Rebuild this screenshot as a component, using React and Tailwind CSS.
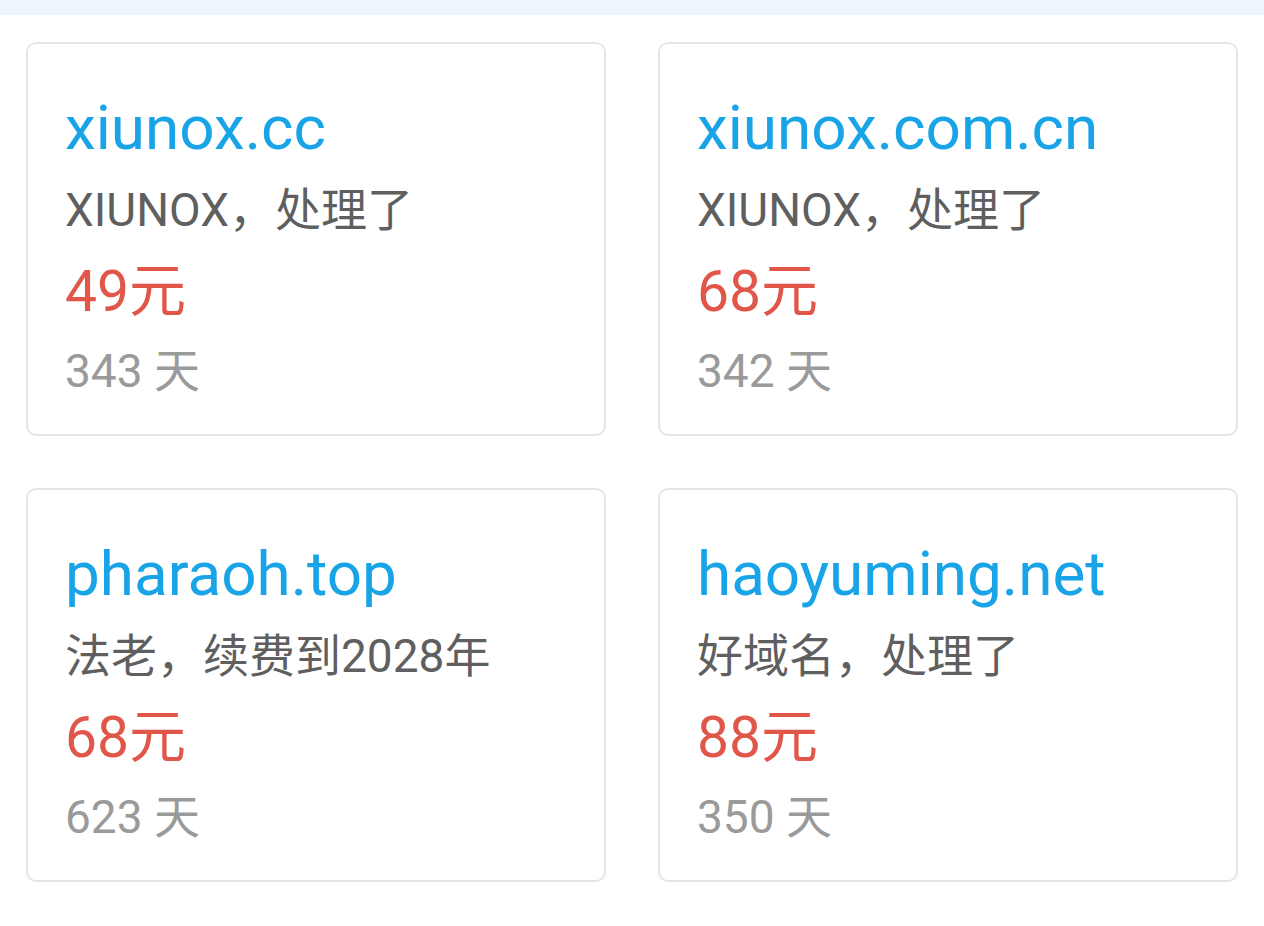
import React from "react";

const domains = [
  { name: "xiunox.cc", note: "XIUNOX，处理了", price: "49元", days: "343 天" },
  { name: "xiunox.com.cn", note: "XIUNOX，处理了", price: "68元", days: "342 天" },
  { name: "pharaoh.top", note: "法老，续费到2028年", price: "68元", days: "623 天" },
  { name: "haoyuming.net", note: "好域名，处理了", price: "88元", days: "350 天" },
];

function DomainCard({ item }) {
  return (
    <div className="h-[394px] rounded-[10px] border-2 border-[#e3e6e9] bg-white pl-[37px] pt-[43px]">
      <div className="text-[62px] leading-[82px] text-[#19a4e8]">{item.name}</div>
      <div className="text-[46px] leading-[82px] text-[#5f5f5f]">{item.note}</div>
      <div className="text-[57px] leading-[82px] text-[#e0574a]">{item.price}</div>
      <div className="text-[46px] leading-[76px] text-[#9a9a9a]">{item.days}</div>
    </div>
  );
}

export default function App() {
  return (
    <div
      className="min-h-screen bg-white"
      style={{ fontFamily: 'Roboto, "Noto Sans CJK SC", sans-serif' }}
    >
      <div className="h-[15px] bg-[#eef5fc]" />
      <div className="grid grid-cols-2 gap-x-[52px] gap-y-[52px] px-[26px] pt-[27px]">
        {domains.map((d) => (
          <DomainCard key={d.name} item={d} />
        ))}
      </div>
    </div>
  );
}
